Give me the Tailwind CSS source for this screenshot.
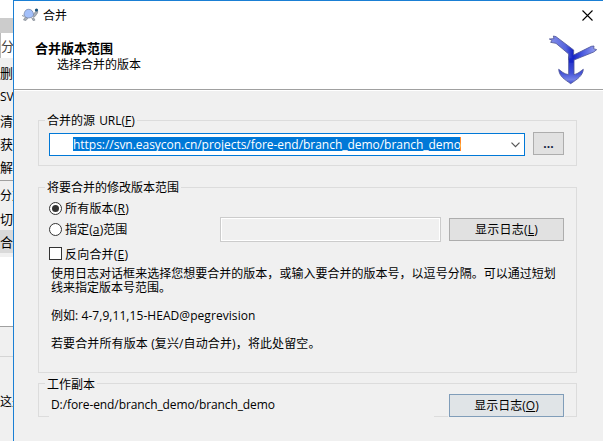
<!DOCTYPE html>
<html lang="zh-CN">

<head>
    <meta charset="UTF-8">
    <meta name="viewport" content="width=device-width, initial-scale=1.0">
    <title>合并</title>
    <script src="https://cdn.jsdelivr.net/npm/@tailwindcss/browser@4"></script>
</head>

<body class="flex h-[441px] w-[603px] overflow-hidden bg-[#f0f0f0] font-['Open_Sans','Noto_Sans_CJK_SC',sans-serif] text-[12px] leading-[14px] text-black whitespace-nowrap">
    <!-- 后面的窗口 -->
    <aside class="flex h-full w-[13px] shrink-0 flex-col overflow-hidden bg-[#f0f0f0] text-[13px]">
        <div class="h-[18px] shrink-0 bg-white"></div>
        <div class="h-[15px] shrink-0 bg-[#cccccc]"></div>
        <div class="flex h-[25px] shrink-0 items-center border-l border-[#bbbbbb] bg-white text-[#444]">分支</div>
        <div class="mt-[3px] flex h-[24px] shrink-0 items-center">删除</div>
        <div class="flex h-[24px] shrink-0 items-center text-[12px]">SVN</div>
        <div class="flex h-[23px] shrink-0 items-center">清理</div>
        <div class="flex h-[23px] shrink-0 items-center">获取</div>
        <div class="flex h-[23px] shrink-0 items-center">解除</div>
        <div class="mt-[2px] h-px shrink-0 bg-[#a0a0a0]"></div>
        <div class="mt-[3px] flex h-[24px] shrink-0 items-center text-[12px]">分支</div>
        <div class="flex h-[22px] shrink-0 items-center">切换</div>
        <div class="flex h-[23px] shrink-0 items-center bg-[#d9d9d9]">合并</div>
        <div class="mt-[4px] h-[69px] shrink-0 bg-white"></div>
        <div class="h-px shrink-0 bg-[#a0a0a0]"></div>
        <div class="h-[30px] shrink-0 border-b border-[#d5d5d5]"></div>
        <div class="mt-[38px] shrink-0 text-[12px]">这是</div>
    </aside>

    <!-- 合并对话框 -->
    <main class="flex w-[590px] flex-col border-t border-l border-[#1a7fd4]">
        <header class="h-[88px] bg-white">
            <div class="flex h-[28px] items-center pl-[8px]">
                <svg class="h-[14px] w-[17px]" viewBox="0 0 17 14">
                    <path d="M3.500 8.500 1.500 12l2.500.5L6 10M9.500 9.500l1.500 3 2-.3-1.200-2.200M11 7l2.500-3.500 2.200-.3L15.500 5l-2.500 3.500-2 1" fill="#a9b0b8" stroke="#77808c" stroke-width=".6" />
                    <path d="M2 7C2.300 3 4 1.300 6.800 1.300S11.300 3.400 11.600 7c-1.200 2.300-3 2.900-5 2.900S3 9.300 2 7Z" fill="#a3c0fa" stroke="#7788a8" stroke-width=".8" />
                    <path d="M0 7.500 2.500 8.500" stroke="#8792a0" stroke-width="1" />
                    <circle cx="14.500" cy="2" r="1.600" fill="#174f78" />
                </svg>
                <h1 class="ml-[4px] pt-px">合并</h1>
                <svg class="ml-auto mr-[10px] h-[11px] w-[11px]" viewBox="0 0 11 11" fill="none" stroke="#000" stroke-width="1.100">
                    <path d="M.5.5l10 10M10.500.5l-10 10" />
                </svg>
            </div>
            <div class="flex">
                <div class="pt-[12px] pl-[21px]">
                    <h2 class="text-[13px] leading-[15px] font-bold">合并版本范围</h2>
                    <p class="pt-px pl-[22px] leading-[15px]">选择合并的版本</p>
                </div>
                <svg class="mt-px ml-auto h-[58px] w-[59px]" viewBox="0 0 177 174">
                    <defs>
                        <linearGradient id="arm" x1="0" x2="1" y1="0" y2="0">
                            <stop offset="0" stop-color="#8791ec" />
                            <stop offset=".35" stop-color="#5564dc" />
                            <stop offset=".5" stop-color="#1522c4" />
                            <stop offset=".7" stop-color="#4a5ade" />
                            <stop offset="1" stop-color="#9aa3f0" />
                        </linearGradient>
                        <linearGradient id="anchor" x1="0" x2="0" y1="0" y2="1">
                            <stop offset="0" stop-color="#1a28c8" />
                            <stop offset=".6" stop-color="#4352d8" />
                            <stop offset=".85" stop-color="#7582e6" />
                            <stop offset="1" stop-color="#3947ce" />
                        </linearGradient>
                    </defs>
                    <g stroke="#4e5598" stroke-width="2.500" stroke-linejoin="round">
                        <path d="M74 80H90V134C104 131 109 123 118 118C116 138 99 148 80 161C62 148 46 140 44 118C53 124 59 132 74 134Z" fill="url(#anchor)" />
                        <path d="M16 27 30 26 28 18 36 20 89 60V75L142 49 150 48 149 56 158 59 149 66 90 90H74V72L36 40 20 37 24 31Z" fill="url(#arm)" />
                    </g>
                    <path d="M75.500 85H88.500V98H75.500Z" fill="#1826c6" />
                </svg>
            </div>
        </header>
        <div class="h-px shrink-0 bg-[#a0a0a0]"></div>
        <div class="h-px shrink-0 bg-white"></div>

        <div class="flex flex-col pt-[29px] pl-[24px]">
            <section class="relative h-[46px] w-[539px] border border-[#dcdcdc]">
                <h3 class="absolute -top-[7px] left-[6px] bg-[#f0f0f0] px-[2px]">合并的源 <span class="ml-[1px]">URL(<u>F</u>)</span></h3>
                <div class="flex pt-[11px] pl-[10px]">
                    <div class="mt-px flex h-[23px] w-[476px] items-center border border-[#0078d7] bg-white pl-[23px]">
                        <span class="-mt-px h-[14px] w-[388px] border-r border-[#ff8728] bg-[#0078d7] leading-[15px] tracking-[-0.03px] text-white">https://svn.easycon.cn/projects/fore-end/branch_demo/branch_demo</span>
                        <svg class="mr-[4px] ml-auto h-[6px] w-[9px]" viewBox="0 0 9 6" fill="none" stroke="#555" stroke-width="1.200">
                            <path d="M.5.700 4.500 4.700 8.500.700" />
                        </svg>
                    </div>
                    <button class="ml-[8px] h-[23px] w-[31px] border border-[#adadad] bg-[#e1e1e1] leading-[14px] font-bold text-[#102040]">...</button>
                </div>
            </section>

            <section class="relative mt-[21px] h-[186px] w-[539px] border border-[#dcdcdc]">
                <h3 class="absolute -top-[7px] left-[6px] bg-[#f0f0f0] px-[2px]">将要合并的修改版本范围</h3>
                <div class="flex pl-[10px]">
                    <div class="w-[171px] pt-[13px]">
                        <label class="flex h-[14px] items-center">
                            <span class="flex size-[13px] items-center justify-center rounded-full border border-[#333] bg-white"><span class="size-[7px] rounded-full bg-[#333]"></span></span>
                            <span class="ml-[3px] pt-px tracking-[0.2px]">所有版本(<u>R</u>)</span>
                        </label>
                        <label class="mt-[7px] flex h-[14px] items-center">
                            <span class="size-[13px] rounded-full border border-[#333] bg-white"></span>
                            <span class="ml-[3px] pt-px tracking-[0.1px]">指定(<u>a</u>)范围</span>
                        </label>
                        <label class="mt-[11px] flex h-[14px] items-center">
                            <span class="-mt-px size-[13px] border border-[#333] bg-white"></span>
                            <span class="ml-[3px] pt-px tracking-[0.2px]">反向合并(<u>E</u>)</span>
                        </label>
                    </div>
                    <div class="mt-[29px] h-[25px] w-[221px] border border-[#cccccc] bg-[#f0f0f0] inset-ring inset-ring-white"></div>
                    <button class="mt-[30px] ml-[8px] h-[23px] w-[115px] border border-[#adadad] bg-[#e1e1e1] pt-px tracking-[0.2px]">显示日志(<u>L</u>)</button>
                </div>
                <div class="pt-[6px] pl-[12px]">
                    <p class="tracking-[0.02px]">使用日志对话框来选择您想要合并的版本，或输入要合并的版本号，以逗号分隔。可以通过短划</p>
                    <p>线来指定版本号范围。</p>
                    <p class="mt-[14px] tracking-[0.06px]">例如: 4-7,9,11,15-HEAD@pegrevision</p>
                    <p class="mt-[14px] tracking-[0.12px]">若要合并所有版本 (复兴/自动合并)，将此处留空。</p>
                </div>
            </section>

            <section class="relative mt-[10px] flex h-[34px] w-[539px] border border-[#dcdcdc] pt-[10px] pl-[10px]">
                <h3 class="absolute -top-[6px] left-[6px] bg-[#f0f0f0] px-[2px]">工作副本</h3>
                <p class="h-[23px] w-[385px] shrink-0 bg-[#f0f0f0] pt-[4px] pl-[2px] tracking-[-0.1px]">D:/fore-end/branch_demo/branch_demo</p>
                <button class="ml-[15px] h-[23px] w-[115px] shrink-0 border border-[#809db9] bg-[#e0e4e7] pt-px outline outline-[#f0f0f0]">显示日志(<u>O</u>)</button>
            </section>
        </div>
    </main>
</body>

</html>
